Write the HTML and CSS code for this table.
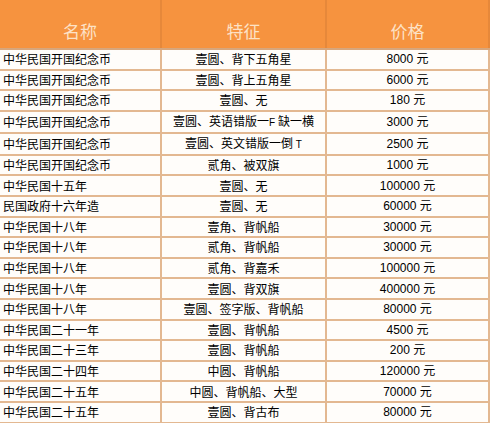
FILE: index.html
```html
<!DOCTYPE html>
<html lang="zh-CN">
<head>
<meta charset="utf-8">
<title>民国银币价格表</title>
<link rel="stylesheet" href="styles.css">
</head>
<body>
<table class="price-table">
  <colgroup>
    <col class="c-name">
    <col class="c-feat">
    <col class="c-price">
  </colgroup>
  <thead>
    <tr><th class="hc">名称</th><th class="hc">特征</th><th class="hc">价格</th></tr>
  </thead>
  <tbody>
    <tr><td class="name">中华民国开国纪念币</td><td class="feat">壹圆、背下五角星</td><td class="price">8000 元</td></tr>
    <tr><td class="name">中华民国开国纪念币</td><td class="feat">壹圆、背上五角星</td><td class="price">6000 元</td></tr>
    <tr><td class="name">中华民国开国纪念币</td><td class="feat">壹圆、无</td><td class="price">180 元</td></tr>
    <tr><td class="name">中华民国开国纪念币</td><td class="feat">壹圆、英语错版一<span class="lat">F</span> 缺一横</td><td class="price">3000 元</td></tr>
    <tr><td class="name">中华民国开国纪念币</td><td class="feat">壹圆、英文错版一倒 <span class="lat">T</span></td><td class="price">2500 元</td></tr>
    <tr><td class="name">中华民国开国纪念币</td><td class="feat">贰角、被双旗</td><td class="price">1000 元</td></tr>
    <tr><td class="name">中华民国十五年</td><td class="feat">壹圆、无</td><td class="price">100000 元</td></tr>
    <tr><td class="name">民国政府十六年造</td><td class="feat">壹圆、无</td><td class="price">60000 元</td></tr>
    <tr><td class="name">中华民国十八年</td><td class="feat">壹角、背帆船</td><td class="price">30000 元</td></tr>
    <tr><td class="name">中华民国十八年</td><td class="feat">贰角、背帆船</td><td class="price">30000 元</td></tr>
    <tr><td class="name">中华民国十八年</td><td class="feat">贰角、背嘉禾</td><td class="price">100000 元</td></tr>
    <tr><td class="name">中华民国十八年</td><td class="feat">壹圆、背双旗</td><td class="price">400000 元</td></tr>
    <tr><td class="name">中华民国十八年</td><td class="feat">壹圆、签字版、背帆船</td><td class="price">80000 元</td></tr>
    <tr><td class="name">中华民国二十一年</td><td class="feat">壹圆、背帆船</td><td class="price">4500 元</td></tr>
    <tr><td class="name">中华民国二十三年</td><td class="feat">壹圆、背帆船</td><td class="price">200 元</td></tr>
    <tr><td class="name">中华民国二十四年</td><td class="feat">中圆、背帆船</td><td class="price">120000 元</td></tr>
    <tr><td class="name">中华民国二十五年</td><td class="feat">中圆、背帆船、大型</td><td class="price">70000 元</td></tr>
    <tr><td class="name">中华民国二十五年</td><td class="feat">壹圆、背古布</td><td class="price">80000 元</td></tr>
  </tbody>
</table>
</body>
</html>
```
FILE: styles.css
```css
html, body {
  margin: 0;
  padding: 0;
  background: #ffffff;
}

.price-table {
  width: 489px;
  table-layout: fixed;
  border-collapse: collapse;
  font-family: "Noto Sans CJK SC", "Noto Sans", sans-serif;
  color: #000000;
}

.c-name { width: 161px; }
.c-feat { width: 165px; }
.c-price { width: 163px; }

.price-table th.hc {
  height: 27px;
  padding: 21px 0 0 0;
  vertical-align: top;
  background: #f6933f;
  color: #fde2c6;
  font-size: 17px;
  line-height: 20px;
  font-weight: normal;
  text-align: center;
  border-left: 2px solid #e6883a;
  border-right: 2px solid #e6883a;
  border-bottom: 2px solid #d7a67c;
  border-top: 0;
}

.price-table th.hc:first-child { border-left: 0; }

.price-table td {
  height: 18.6px;
  padding: 0 3px;
  font-size: 12px;
  line-height: 18px;
  white-space: nowrap;
  overflow: hidden;
  background: #fffdfa;
  border: 2px solid #e3b891;
}

.price-table td.name {
  text-align: left;
  border-left: 0;
}

.price-table td.feat {
  text-align: center;
}

.price-table td.price {
  text-align: center;
  font-family: "Liberation Sans", "Noto Sans CJK SC", sans-serif;
}

.lat {
  font-family: "Liberation Sans", sans-serif;
  font-size: 10px;
}
```
